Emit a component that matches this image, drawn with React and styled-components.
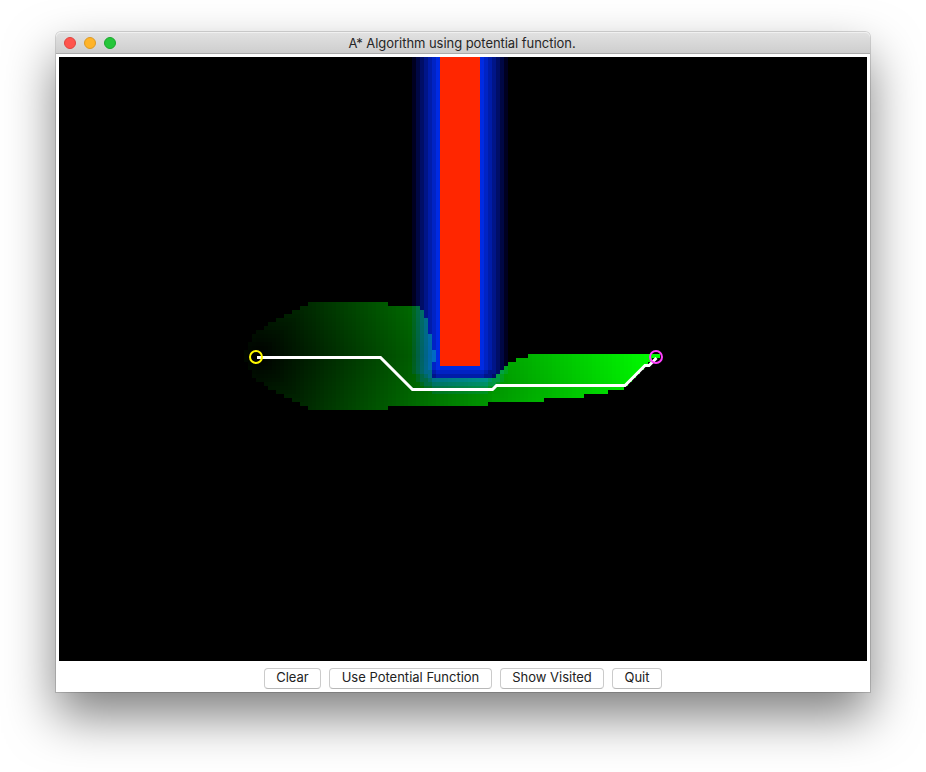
import React from "react";
import styled, { createGlobalStyle } from "styled-components";

const CELL = 4;
const X0 = 240;
const Y0 = 290;

// [first column, last column, top row, bottom row (exclusive)]
const SPANS = [
  [1, 1, 15, 18], [2, 2, 13, 20], [3, 3, 11, 22], [4, 5, 10, 23], [6, 6, 9, 24],
  [7, 8, 8, 25], [9, 10, 7, 26], [11, 12, 6, 27], [13, 14, 5, 28], [15, 16, 4, 29],
  [17, 36, 3, 30], [37, 44, 4, 29], [45, 45, 5, 29], [46, 46, 7, 29], [47, 47, 11, 29],
  [48, 48, 15, 18], [48, 61, 22, 29], [62, 63, 22, 28], [64, 64, 21, 28], [65, 65, 20, 28],
  [66, 66, 19, 28], [67, 68, 18, 28], [69, 71, 17, 28], [72, 75, 16, 28], [76, 85, 16, 27],
  [86, 91, 16, 26], [92, 95, 16, 25], [96, 96, 16, 24], [97, 97, 16, 23], [98, 98, 16, 22],
  [99, 99, 16, 21], [100, 100, 16, 20], [101, 101, 16, 19], [102, 102, 16, 18],
  [103, 103, 16, 17], [104, 104, 16, 17],
];

const octile = (ax, ay, bx, by) => {
  const dx = Math.abs(ax - bx);
  const dy = Math.abs(ay - by);
  return Math.max(dx, dy) + 0.414 * Math.min(dx, dy);
};

const travelled = (c, r) => {
  if (c < 48) return octile(c, r, 4, 16);
  if (c === 48 && r < 20) return octile(c, r, 4, 16);
  const corner = octile(43, 24, 4, 16);
  if (c < 63) return corner + octile(c, r, 43, 24);
  return corner + 20 + octile(c, r, 63, 24);
};
const MAX_COST = travelled(104, 16);

const cells = SPANS.flatMap(([c0, c1, r0, r1]) => {
  const out = [];
  for (let c = c0; c <= c1; c++) {
    for (let r = r0; r < r1; r++) {
      out.push({ c, r, g: Math.round((255 * travelled(c, r)) / MAX_COST) });
    }
  }
  return out;
});

// Field strength around the wall, weakest first.
const FIELD = ["#000020", "#000744", "#000e66", "#001588", "#001ca8", "#0023c4", "#002ae2"];

const fieldTip = [];
for (let r = 19; r <= 25; r++) {
  for (let c = 43; c <= 66; c++) {
    const dx = Math.max(50 - c, 0, c - 59);
    const level = 7 - Math.round(Math.hypot(dx, r - 18));
    if (level >= 0) fieldTip.push({ c, r, fill: FIELD[level] });
  }
}

const Global = createGlobalStyle`
  html, body { margin: 0; background: #fff; }
  body { height: 772px; overflow: hidden; }
`;

const Desktop = styled.div`
  display: flex;
  box-sizing: border-box;
  width: 926px;
  height: 772px;
  padding: 32px 56px 80px;
  overflow: hidden;
  font-family: Inter, "Liberation Sans", sans-serif;
  color: #262626;
`;

const Window = styled.main`
  display: flex;
  flex-direction: column;
  width: 814px;
  height: 660px;
  border-radius: 5px 5px 0 0;
  background: #fff;
  box-shadow: 0 0 0 1px rgba(0, 0, 0, 0.15), 0 24px 50px rgba(0, 0, 0, 0.5);
`;

const TitleBar = styled.header`
  display: grid;
  grid-template-columns: 70px 1fr 70px;
  align-items: center;
  box-sizing: border-box;
  height: 22px;
  flex: none;
  border-radius: 5px 5px 0 0;
  border-bottom: 1px solid #acacac;
  background: linear-gradient(#e2e2e2, #cecece);
  box-shadow: inset 0 1px #f0f0f0;
`;

const Lights = styled.div`
  display: flex;
  gap: 8px;
  padding: 1px 0 0 8px;
`;

const Light = styled.span`
  box-sizing: border-box;
  width: 12px;
  height: 12px;
  border-radius: 50%;
  border: 1px solid ${(p) => p.$edge};
  background: ${(p) => p.$fill};
`;

const Title = styled.h1`
  margin: 0;
  padding-right: 2px;
  text-align: center;
  white-space: nowrap;
  font-size: 13px;
  line-height: 20px;
  font-weight: 400;
  letter-spacing: -0.05px;
`;

const Grid = styled.svg`
  display: block;
  flex: none;
  width: 808px;
  height: 604px;
  margin: 3px 3px 0;
  background: #000;
  isolation: isolate;
`;

const Visited = styled.g`
  mix-blend-mode: lighten;
`;

const Controls = styled.footer`
  display: flex;
  justify-content: center;
  gap: 8px;
  padding-top: 7px;
`;

const Button = styled.button`
  box-sizing: border-box;
  width: ${(p) => p.$width}px;
  height: 21px;
  padding: 0 0 3px;
  border: 1px solid #cbcbcb;
  border-bottom-color: #b8b8b8;
  border-radius: 4px;
  background: #fff;
  color: #222;
  font: 400 13px/16px Inter, "Liberation Sans", sans-serif;
  white-space: nowrap;
`;

function SearchMap() {
  return (
    <Grid viewBox="59 57 808 604">
      <g shapeRendering="crispEdges">
        {FIELD.map((fill, i) => (
          <rect
            key={fill}
            x={412 + i * CELL}
            y="50"
            width={96 - i * 8}
            height="316"
            fill={fill}
          />
        ))}
        {fieldTip.map(({ c, r, fill }) => (
          <rect
            key={`${c}-${r}`}
            x={X0 + c * CELL}
            y={Y0 + r * CELL}
            width={CELL}
            height={CELL}
            fill={fill}
          />
        ))}
        <rect x="440" y="50" width="40" height="316" fill="#ff2600" />
      </g>
      <Visited shapeRendering="crispEdges">
        {cells.map(({ c, r, g }) => (
          <rect
            key={`${c}-${r}`}
            x={X0 + c * CELL}
            y={Y0 + r * CELL}
            width={CELL}
            height={CELL}
            fill={`rgb(0,${g},0)`}
          />
        ))}
      </Visited>
      <path
        d="M257 357.5H380.5L412.5 389.5H492.5L496.5 385.5H625L645 365.5H649L656.5 358"
        fill="none"
        stroke="#fff"
        strokeWidth="3"
      />
      <circle cx="256" cy="357" r="6" fill="none" stroke="#fffb00" strokeWidth="2" />
      <circle cx="656" cy="357" r="6" fill="none" stroke="#ff40ff" strokeWidth="2" />
    </Grid>
  );
}

export default function App() {
  return (
    <>
      <Global />
      <Desktop>
        <Window>
          <TitleBar>
            <Lights>
              <Light $fill="#ff544d" $edge="#e0443e" />
              <Light $fill="#ffb429" $edge="#dd9a25" />
              <Light $fill="#25c63a" $edge="#1aa82c" />
            </Lights>
            <Title>A* Algorithm using potential function.</Title>
          </TitleBar>
          <SearchMap />
          <Controls>
            <Button $width={57}>Clear</Button>
            <Button $width={163}>Use Potential Function</Button>
            <Button $width={104}>Show Visited</Button>
            <Button $width={50}>Quit</Button>
          </Controls>
        </Window>
      </Desktop>
    </>
  );
}
